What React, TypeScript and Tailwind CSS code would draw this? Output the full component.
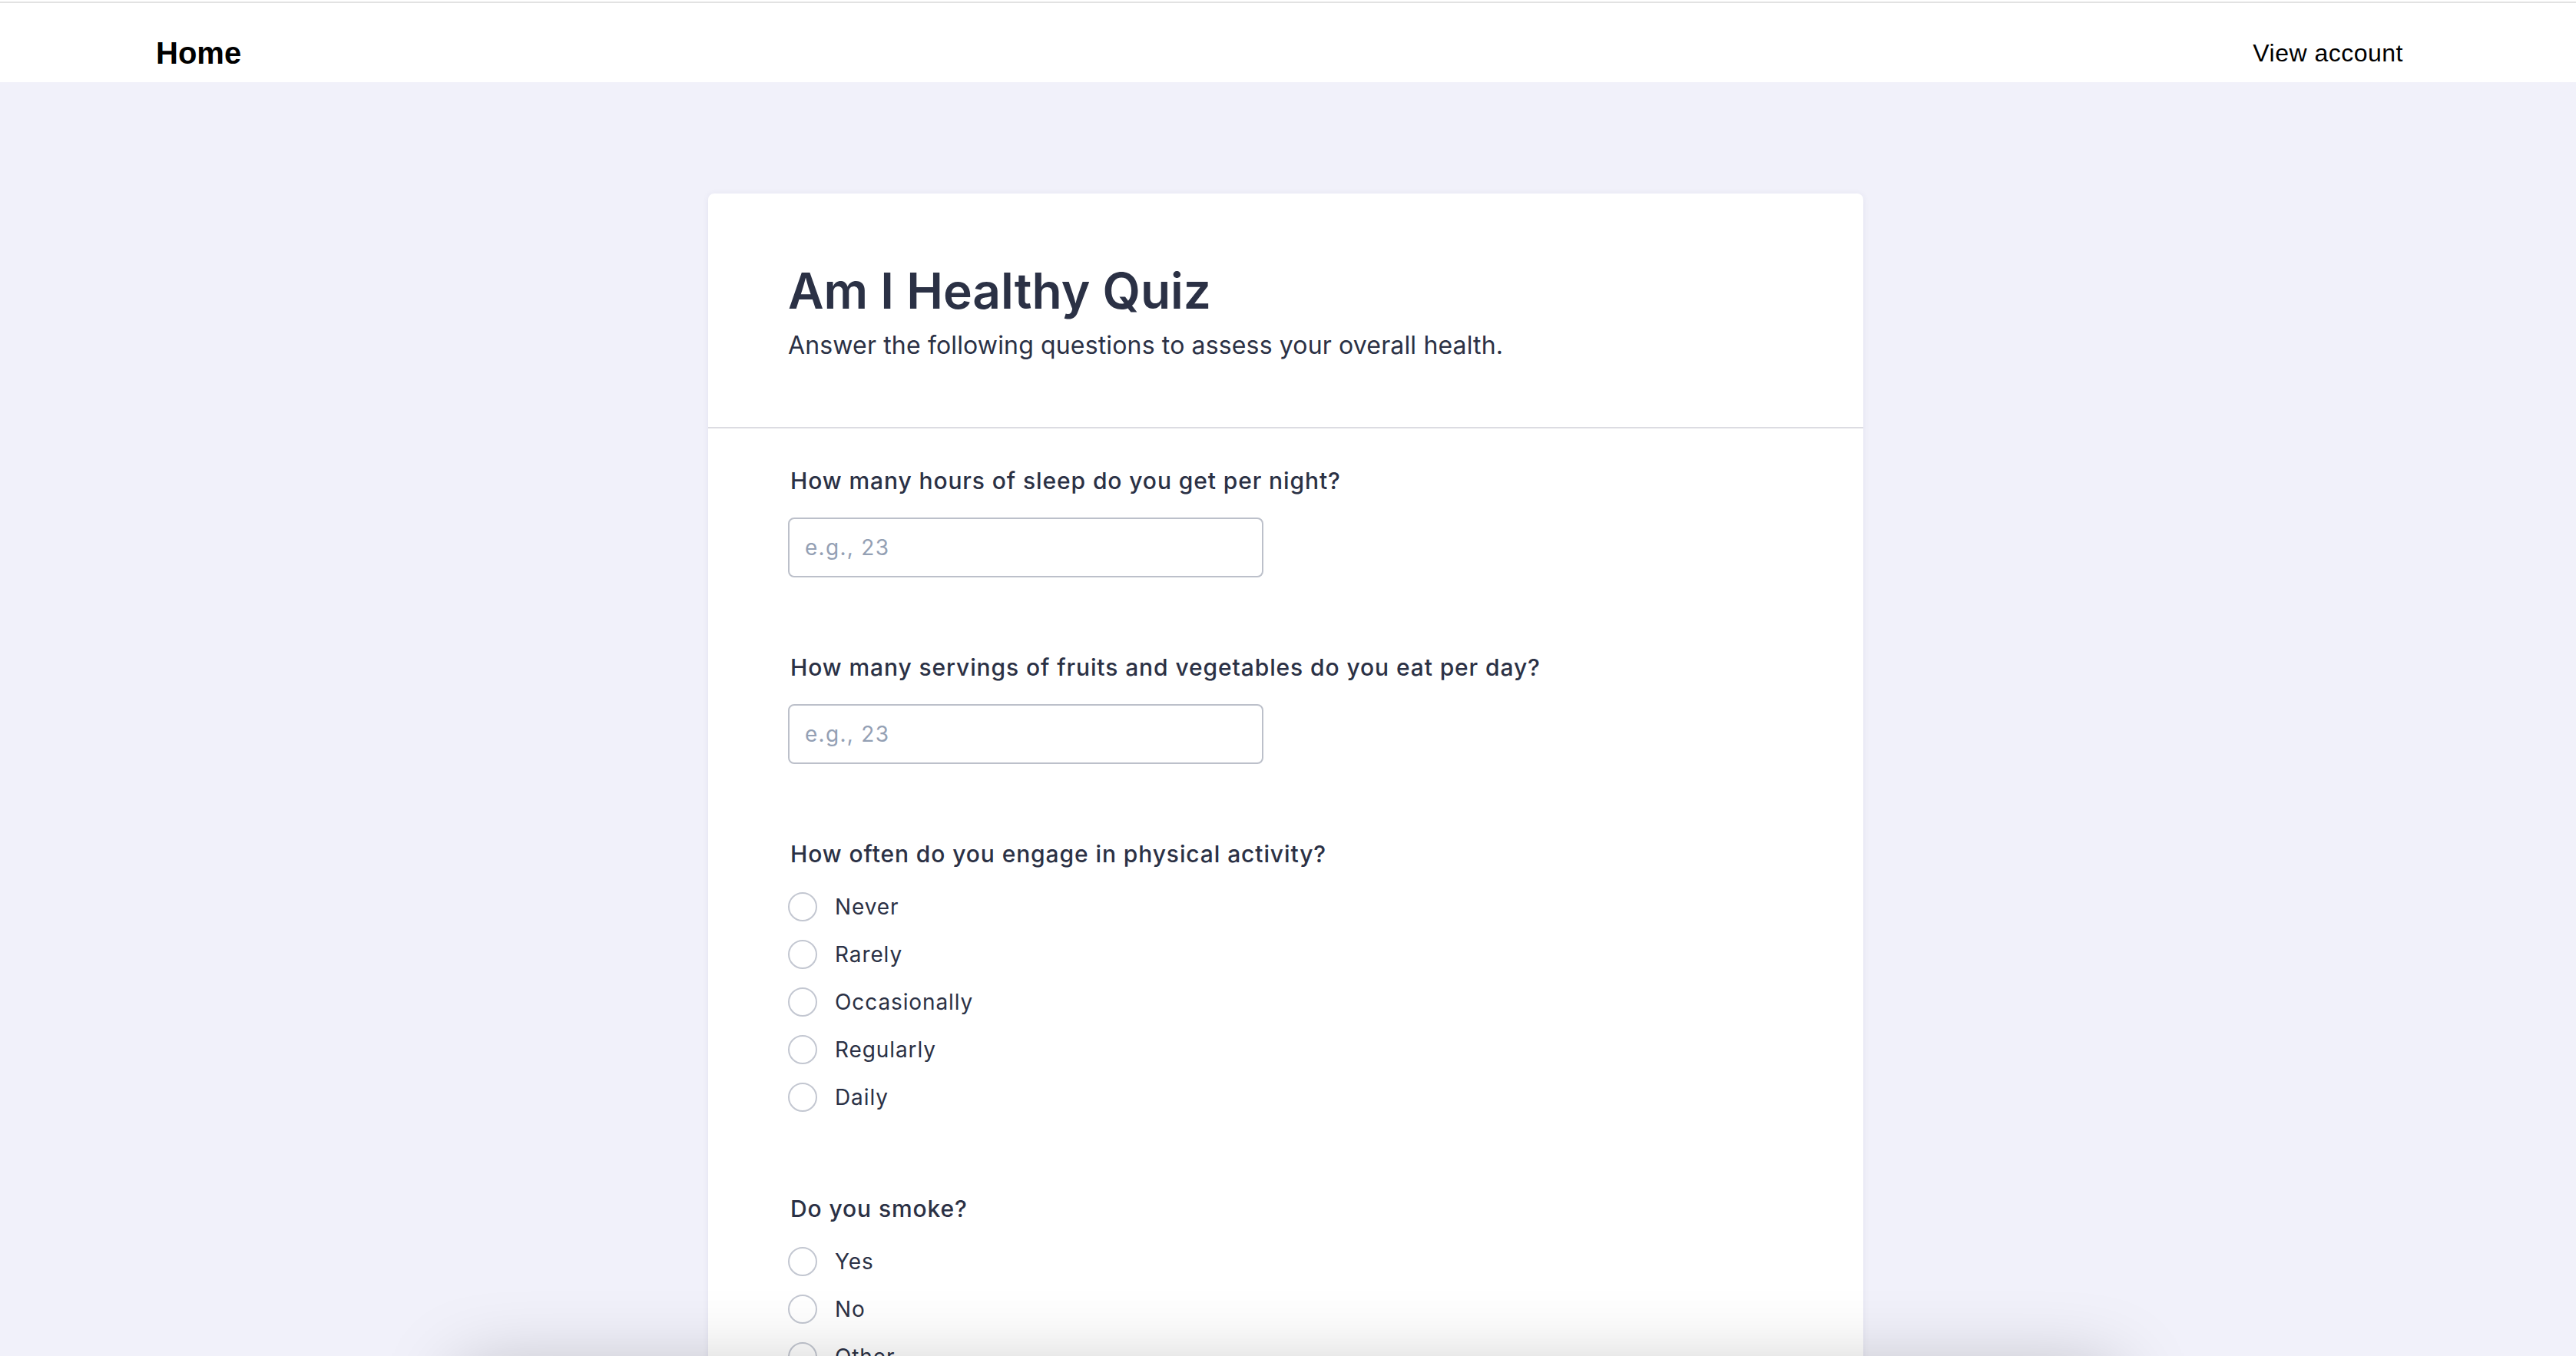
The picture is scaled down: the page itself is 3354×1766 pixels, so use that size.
import React from "react";

type Q =
  | { kind: "text"; label: string }
  | { kind: "radio"; label: string; options: string[] };

const questions: Q[] = [
  { kind: "text", label: "How many hours of sleep do you get per night?" },
  { kind: "text", label: "How many servings of fruits and vegetables do you eat per day?" },
  {
    kind: "radio",
    label: "How often do you engage in physical activity?",
    options: ["Never", "Rarely", "Occasionally", "Regularly", "Daily"],
  },
  { kind: "radio", label: "Do you smoke?", options: ["Yes", "No", "Other"] },
  {
    kind: "radio",
    label: "How would you rate your stress level?",
    options: ["Low", "Moderate", "High"],
  },
];

function TextQuestion({ label }: { label: string }) {
  return (
    <div className="flex flex-col">
      <label className="pl-[3px] text-[30px] leading-[40px] font-medium tracking-[0.9px] text-[#2b3145]">{label}</label>
      <input
        type="text"
        placeholder="e.g., 23"
        className="mt-[28px] w-[619px] h-[78px] border-2 border-[#bcc0ca] rounded-lg px-[20px] text-[28px] tracking-[1.3px] text-[#2b3145] placeholder:text-[#94a0b4] outline-none bg-white"
      />
    </div>
  );
}

function RadioQuestion({ label, options }: { label: string; options: string[] }) {
  return (
    <div className="flex flex-col pb-[9px]">
      <div className="pl-[3px] text-[30px] leading-[40px] font-medium tracking-[0.9px] text-[#2b3145]">{label}</div>
      <div className="mt-[30px] flex flex-col gap-[24px]">
        {options.map((o) => (
          <div key={o} className="flex items-center h-[38px] gap-[23px]">
            <span className="w-[38px] h-[38px] rounded-full border-2 border-[#c3c7d1] bg-white shrink-0" />
            <span className="text-[28px] leading-[38px] tracking-[0.9px] text-[#2b3145]">{o}</span>
          </div>
        ))}
      </div>
    </div>
  );
}

export default function App() {
  return (
    <div className="relative h-[1766px] overflow-hidden bg-[#f1f1fa] font-['Inter',sans-serif]">
      <header className="bg-white h-[107px] font-['Liberation_Sans',Arial,sans-serif]">
        <div className="h-[2px] bg-white" />
        <div className="h-[2px] bg-[#e2e2e2]" />
        <div className="flex justify-between items-start pl-[203px] pr-[225px] pt-[41px]">
          <span className="text-[40px] leading-[48px] font-bold text-black">Home</span>
          <span className="text-[32px] leading-[48px] tracking-[0.5px] text-black">View account</span>
        </div>
      </header>

      <main className="pt-[145px] pr-[6px]">
        <div className="w-[1504px] mx-auto bg-white rounded-lg shadow-[0_1px_8px_rgba(60,60,120,0.08)]">
          <div className="px-[104px] pt-[87px] pb-[86px] border-b-2 border-[#dcdce2]">
            <h1 className="text-[64px] leading-[80px] font-semibold text-[#2b3145]">Am I Healthy Quiz</h1>
            <p className="mt-[11px] text-[32px] leading-[40px] tracking-[0.15px] text-[#2b3145]">
              Answer the following questions to assess your overall health.
            </p>
          </div>
          <div className="px-[104px] pt-[48px] pb-[100px] flex flex-col gap-[97px]">
            {questions.map((q) =>
              q.kind === "text" ? (
                <TextQuestion key={q.label} label={q.label} />
              ) : (
                <RadioQuestion key={q.label} label={q.label} options={q.options} />
              )
            )}
          </div>
        </div>
      </main>

      <div className="absolute left-[600px] w-[2154px] top-[1786px] h-[200px] bg-white shadow-[0_0_100px_rgba(0,0,0,0.25)]" />
    </div>
  );
}
